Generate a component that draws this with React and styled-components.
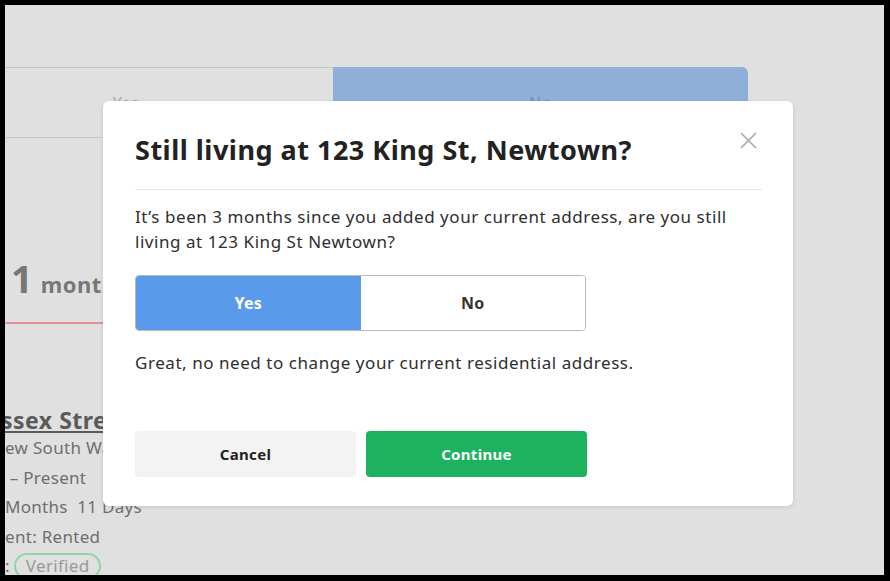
import React from "react";
import styled, { createGlobalStyle } from "styled-components";

const Global = createGlobalStyle`
  html, body { margin: 0; padding: 0; }
  body { font-family: "Noto Sans", "Liberation Sans", sans-serif; }
  * { box-sizing: border-box; }
`;

const Frame = styled.div`
  width: 890px;
  height: 581px;
  border: 5px solid #000;
  border-right-width: 6px;
  border-bottom-width: 6px;
  background: #e0e0e0;
  overflow: hidden;
  position: relative;
`;

const Page = styled.div`
  display: flex;
  flex-direction: column;
  padding-top: 62px;
  margin-left: -87px;
  width: 840px;
`;

const BgToggle = styled.div`
  display: grid;
  grid-template-columns: 415px 415px;
  height: 71px;
`;

const BgSegment = styled.div`
  display: flex;
  align-items: center;
  justify-content: center;
  font-size: 16px;
  letter-spacing: 0.5px;
  color: ${(p) => (p.$active ? "#6f8fbd" : "#a8a8a8")};
  background: ${(p) => (p.$active ? "#8fafd9" : "transparent")};
  border: ${(p) => (p.$active ? "none" : "1px solid #c6c6c6")};
  border-right: none;
  border-radius: ${(p) => (p.$active ? "0 6px 6px 0" : "0")};
`;

const Duration = styled.div`
  display: flex;
  align-items: baseline;
  gap: 8px;
  margin-top: 120px;
  padding-left: 93px;
  color: #777;
  font-weight: 700;
`;

const Big = styled.span`
  font-size: 38px;
  line-height: 40px;
`;

const Unit = styled.span`
  font-size: 22px;
  letter-spacing: 0.5px;
`;

const PinkLine = styled.div`
  height: 2px;
  background: #e3909c;
  margin-top: 23px;
  margin-left: 87px;
  width: 400px;
`;

const Details = styled.div`
  display: flex;
  flex-direction: column;
  margin-top: 83px;
  padding-left: 87px;
  color: #6e6e6e;
  font-size: 17px;
  line-height: 29.5px;
  letter-spacing: 0.3px;
`;

const Street = styled.div`
  font-size: 23px;
  font-weight: 700;
  text-decoration: underline;
  color: #5a5a5a;
  line-height: 26px;
  margin-left: -4px;
  letter-spacing: 0.5px;
`;

const Line = styled.div`
  white-space: pre;
`;

const Pill = styled.span`
  display: inline-block;
  border: 2px solid #8fd6a6;
  border-radius: 14px;
  padding: 0 10px;
  line-height: 22px;
  color: #9a9a9a;
  margin-left: 4px;
`;

const Modal = styled.div`
  position: absolute;
  left: 98px;
  top: 96px;
  width: 690px;
  height: 405px;
  background: #fff;
  border-radius: 6px;
  box-shadow: 0 1px 4px rgba(0, 0, 0, 0.12);
  padding: 33px 31px 29px 32px;
  display: flex;
  flex-direction: column;
`;

const Header = styled.div`
  display: flex;
  justify-content: space-between;
  align-items: center;
`;

const Title = styled.h2`
  margin: 0;
  font-size: 27px;
  line-height: 32px;
  font-weight: 700;
  color: #222;
  letter-spacing: 0.5px;
`;

const Close = styled.button`
  border: none;
  background: none;
  padding: 0;
  width: 20px;
  height: 20px;
  margin-right: 4px;
  margin-top: -20px;
  display: flex;
  align-items: center;
  justify-content: center;
`;

const Divider = styled.hr`
  border: none;
  border-top: 1px solid #e6e6e6;
  margin: 23px 0 0;
  width: 100%;
`;

const Text = styled.p`
  margin: ${(p) => p.$mt || 0}px 0 0;
  font-size: 17px;
  line-height: 25px;
  letter-spacing: 0.55px;
  color: #2e2e2e;
`;

const Toggle = styled.div`
  display: grid;
  grid-template-columns: 1fr 1fr;
  width: 451px;
  height: 56px;
  margin-top: 21px;
  border: 1px solid #b8b8b8;
  border-radius: 4px;
  overflow: hidden;
`;

const Segment = styled.div`
  display: flex;
  align-items: center;
  justify-content: center;
  font-size: 16px;
  font-weight: 700;
  letter-spacing: 0.3px;
  color: ${(p) => (p.$active ? "#fff" : "#333")};
  background: ${(p) => (p.$active ? "#5a9aea" : "#fff")};
`;

const Actions = styled.div`
  display: grid;
  grid-template-columns: 221px 221px;
  gap: 10px;
  margin-top: auto;
`;

const Button = styled.button`
  height: 46px;
  border: none;
  border-radius: 4px;
  font-family: inherit;
  font-size: 15px;
  font-weight: 700;
  letter-spacing: 0.3px;
  color: ${(p) => (p.$primary ? "#fff" : "#222")};
  background: ${(p) => (p.$primary ? "#1db35e" : "#f3f3f3")};
`;

export default function App() {
  return (
    <>
      <Global />
      <Frame>
        <Page>
          <BgToggle>
            <BgSegment>Yes</BgSegment>
            <BgSegment $active>No</BgSegment>
          </BgToggle>
          <Duration>
            <Big>1</Big>
            <Unit>month</Unit>
          </Duration>
          <PinkLine />
          <Details>
            <Street>ssex Street</Street>
            <Line>ew South Wales</Line>
            <Line> – Present</Line>
            <Line>Months  11 Days</Line>
            <Line>ent: Rented</Line>
            <Line>
              :<Pill>Verified</Pill>
            </Line>
          </Details>
        </Page>
        <Modal>
          <Header>
            <Title>Still living at 123 King St, Newtown?</Title>
            <Close aria-label="Close">
              <svg width="17" height="17" viewBox="0 0 17 17">
                <path d="M1 1 L16 16 M16 1 L1 16" stroke="#a9a9a9" strokeWidth="1.6" fill="none" />
              </svg>
            </Close>
          </Header>
          <Divider />
          <Text $mt={14}>
            It’s been 3 months since you added your current address, are you still living at 123 King St Newtown?
          </Text>
          <Toggle>
            <Segment $active>Yes</Segment>
            <Segment>No</Segment>
          </Toggle>
          <Text $mt={19}>Great, no need to change your current residential address.</Text>
          <Actions>
            <Button>Cancel</Button>
            <Button $primary>Continue</Button>
          </Actions>
        </Modal>
      </Frame>
    </>
  );
}
